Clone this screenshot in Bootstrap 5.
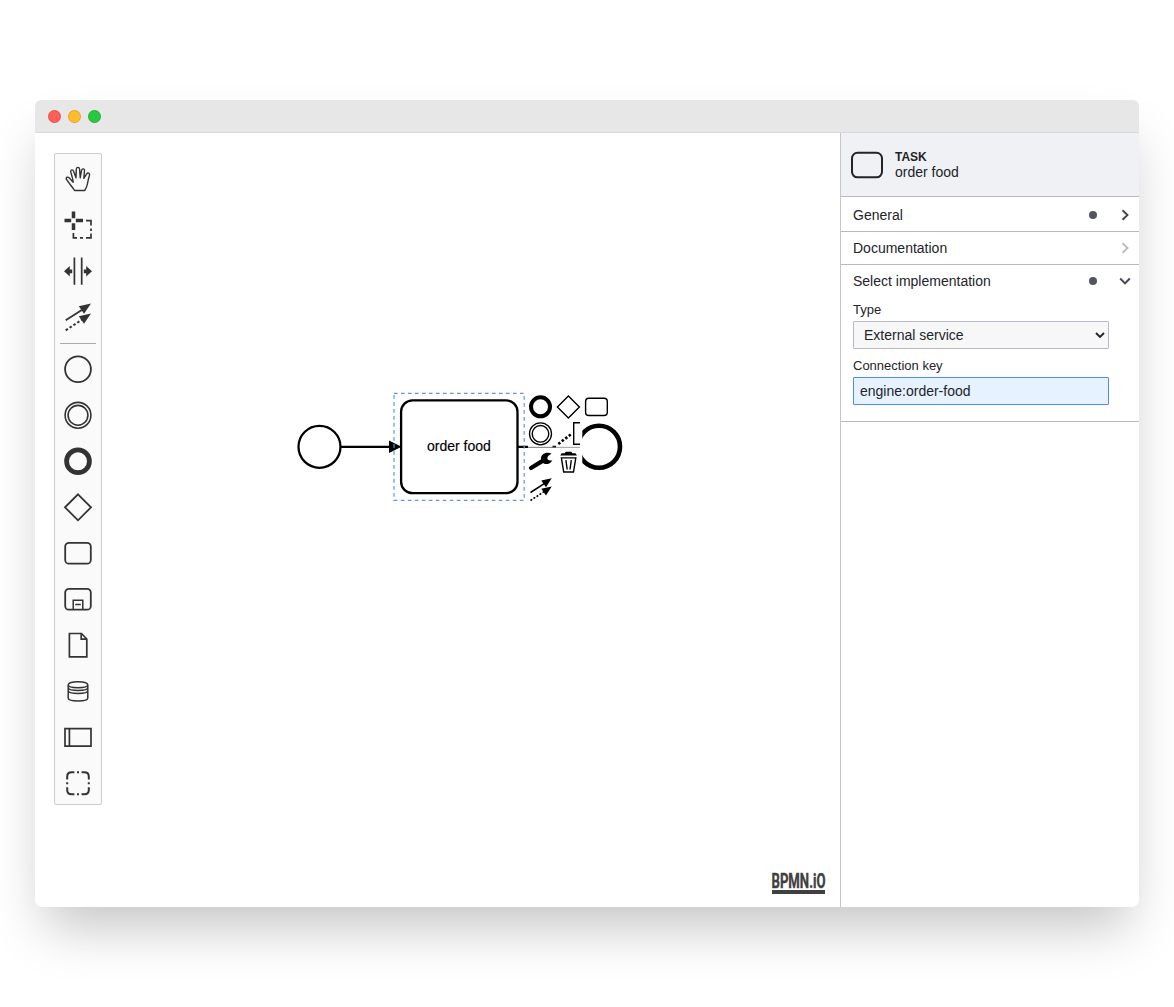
<!DOCTYPE html>
<html lang="en">
<head>
<meta charset="utf-8">
<meta name="viewport" content="width=device-width, initial-scale=1">
<title>order food</title>
<link href="https://cdn.jsdelivr.net/npm/bootstrap@5.3.0/dist/css/bootstrap.min.css" rel="stylesheet">
<script src="https://cdn.jsdelivr.net/npm/bootstrap@5.3.0/dist/js/bootstrap.bundle.min.js"></script>
<style>
body{font-family:"Liberation Sans",Arial,sans-serif;font-size:14px;line-height:16px;color:#22242a;background:#fff;padding:100px 35px;height:1007px;overflow:hidden}
.app-window{height:807px;border-radius:7px;box-shadow:0 30px 50px -10px rgba(0,0,0,.23);background:#fff}
.titlebar{height:33px;background:#e7e7e7;border-bottom:1px solid #d8d8d8;padding:1px 0 0 13px;gap:7px}
.light{width:13px;height:13px;border-radius:50%;border:1px solid rgba(0,0,0,.12)}
.light-r{background:#ff5f57}.light-y{background:#ffbd2e}.light-g{background:#28c940}
.diagram{overflow:visible}
.palette{left:19px;top:20px;width:48px;height:652px;padding-top:2px;background:#fafafa;border:1px solid #ccc;border-radius:2px}
.palette svg{width:46px;height:46px;flex:none;fill:none;stroke:#333;stroke-width:1.8}
.palette .sep{height:1px;margin:3px 5px 2px;background:#aaa;flex:none}
.palette .solid{fill:#333;stroke:none}
.props{width:299px;border-left:1px solid #c5c5cb}
.props-head{height:64px;background:#f0f1f4;border-bottom:1px solid #b9b9c8;padding:0 10px;gap:12px}
.kind{font-size:12px;line-height:15px;padding-top:1px;margin-bottom:-1px}
.grp{height:33px;border-bottom:1px solid #b9b9c8;padding:0 8px 0 12px}
.grp-first{height:35px;padding-top:1px}
.grp-open{height:32px;border-bottom:0}
.dot{width:8px;height:8px;border-radius:50%;background:#52545f}
.chev{width:12px;height:12px;margin-left:22px;fill:none;stroke:#44464f;stroke-width:1.9}
.chev-muted{stroke:#b9b9c8}
.grp-body{padding:5px 30px 16px 12px;border-bottom:1px solid #b9b9c8}
.grp-body label{font-size:13px;line-height:16px;margin-bottom:3px}
.grp-body .form-select,.grp-body .form-control{height:28px;font-size:14px;line-height:16px;border-radius:1px;color:#22242a;box-shadow:none}
.grp-body .form-select{padding:4px 20px 4px 10px;margin-bottom:9px;border-color:#b9b9c8;background:#f7f7f8 url("data:image/svg+xml,%3Csvg xmlns='http://www.w3.org/2000/svg' viewBox='0 0 10 10'%3E%3Cpath d='M1 3l4 4 4-4' fill='none' stroke='%23222' stroke-width='1.8'/%3E%3C/svg%3E") no-repeat right 3px center/10px 10px}
.grp-body .form-control{padding:4px 6px;background:#e6f2ff;border-color:#4a90ea}
</style>
</head>
<body>
<div class="app-window d-flex flex-column">
  <div class="titlebar d-flex align-items-center rounded-top flex-shrink-0">
    <span class="light light-r"></span><span class="light light-y"></span><span class="light light-g"></span>
  </div>
  <div class="d-flex flex-grow-1">
    <main class="position-relative flex-grow-1">
      <svg class="diagram d-block" width="805" height="774" viewBox="35 133 805 774" fill="none" stroke="#000">
        <!-- sequence flows -->
        <path d="M341 446.8H392M518 446.8H578" stroke-width="2.3"/>
        <path d="M389 440.6L401.5 446.8L389 453Z" fill="#000" stroke="none"/>
        <!-- events and task -->
        <circle cx="319.5" cy="446.8" r="21" stroke-width="2.3"/>
        <circle cx="599" cy="446.8" r="21" stroke-width="4.6"/>
        <rect x="401.1" y="400.3" width="116.4" height="92.9" rx="11.5" stroke-width="2.3"/>
        <text x="427" y="451.4" fill="#000" stroke="#000" stroke-width=".15" font-size="14">order food</text>
        <rect x="394" y="393.3" width="130.2" height="107" stroke="#5f93f5" stroke-width="1.2" stroke-dasharray="3.6 3.4"/>
        <!-- context pad -->
        <g fill="#fff" stroke="none" fill-opacity=".98">
          <path d="M528 395H552.5V446.9H528ZM556 395H582V446.9H556Z"/>
          <path d="M528 447.6H552.5V503H528ZM556 447.6H582V475H556Z"/>
          <path d="M580 420H582.3V475H580Z"/>
        </g>
        <path d="M528 447.3H556" stroke="#999" stroke-width=".8"/>
        <path d="M556 447.3H580" stroke="#bbb" stroke-width="1"/>
        <circle cx="540.5" cy="406.8" r="9.5" stroke-width="4"/>
        <path d="M568.4 396L579.4 407L568.4 418L557.4 407Z" stroke-width="1.4"/>
        <rect x="585.6" y="398.2" width="21.7" height="17.3" rx="3.2" stroke-width="1.4"/>
        <circle cx="540.5" cy="433.8" r="11" stroke-width="1.3"/>
        <circle cx="540.5" cy="433.8" r="8.3" stroke-width="1.4"/>
        <path d="M580 422.8H573.7V444.2H580" stroke-width="1.4"/>
        <path d="M558.3 444L572 433.5" stroke-width="2.6" stroke-dasharray="2.5 1.9"/>
        <path d="M531 468L543 460.6" stroke-width="4.2" stroke-linecap="round"/>
        <path d="M551.6 453.7C546.5 451.1 540.9 453.8 541 458.7C541.2 464.3 548.6 466.6 552.4 460.2C546.4 461.6 545.4 456 551.6 453.7Z" fill="#000" stroke="none"/>
        <path d="M560.2 455.4L561.6 453.3H564.6L565.8 451.8H571.3L572.5 453.3H575.5L577 455.4Z" fill="#000" stroke="none"/>
        <path d="M561.4 457.9H575.8L573.5 472H563.7ZM565.9 460.2L567.2 469.5M571.3 460.2L570 469.5" stroke-width="1.4"/>
        <path d="M530.5 492.5L545 483.2" stroke-width="1.5"/>
        <path d="M530.5 500.5L544 491.7" stroke-width="1.6" stroke-dasharray="2 1.6"/>
        <path d="M551.7 478.3L546 487.2L541.3 480.6ZM551.7 486.5L546 495.4L541.3 488.8Z" fill="#000" stroke="none"/>
        <!-- logo -->
        <text x="771.5" y="888" fill="#404040" stroke="#404040" stroke-width=".4" font-family="Roboto, sans-serif" font-weight="700" font-size="20.5" textLength="54" lengthAdjust="spacingAndGlyphs">BPMN.iO</text>
        <path d="M772 890H825V894H772Z" fill="#404040" stroke="none"/>
      </svg>
      <div class="palette position-absolute d-flex flex-column">
        <svg viewBox="-23 -23 46 46"><path d="M-3.4 11.5C-5.6 7.8-9.3 4.2-11.6.2C-12.4-1.8-10.2-2.6-8.7-1L-4.8 3.2C-5-.5-6.6-4.2-7.3-7.4C-7.4-9.5-5-9.7-4.4-7.8L-2-1.2L-1.7-9.8C-1.4-12.2 1.4-12.2 1.6-9.8L2.2-1.2L3.6-8.8C4.2-10.9 6.8-10.4 6.5-8.2L5.8-.6L8.7-5.2C9.8-6.8 12-5.6 11.5-3.8C10.2 0 9.9 3.6 9 6.6C8.4 8.4 7.6 9.8 6.8 11.5Z" stroke-width="1.4" stroke-linejoin="round"/></svg>
        <svg viewBox="-23 -23 46 46"><path d="M-4.5-13.5V-6.7M-4.5-1.8V5M-13.5-4.4H-6.8M-2.2-4.4H5" stroke-width="3.5"/><path d="M8-4.4H13V.5M13 3.5V6M13 8.5V12.8H8M5 12.8H2M-1 12.8H-4.6V8" stroke-width="1.7"/></svg>
        <svg viewBox="-23 -23 46 46"><path d="M-3.6-13.5V13.8M3.7-13.5V13.8" stroke-width="1.7"/><path class="solid" d="M-14 .3L-8.2-4.9V-1.6H-5.8V2.2H-8.2V5.5ZM14 .3L8.2-4.9V-1.6H5.8V2.2H8.2V5.5Z"/></svg>
        <svg viewBox="-23 -23 46 46"><path d="M-12.3 3.3L5-7.7"/><path d="M-12.3 13.3L4 2.6" stroke-width="2" stroke-dasharray="2.6 2"/><path class="solid" d="M13-13.5L6-3.2L.8-10.7ZM13-3.5L6 6.8L.8-.7Z"/></svg>
        <div class="sep"></div>
        <svg viewBox="-23 -23 46 46"><circle cy=".3" r="12.9"/></svg>
        <svg viewBox="-23 -23 46 46"><circle cy=".3" r="12.9" stroke-width="1.6"/><circle cy=".3" r="9.9" stroke-width="1.6"/></svg>
        <svg viewBox="-23 -23 46 46"><circle cy=".3" r="11.4" stroke-width="4.8"/></svg>
        <svg viewBox="-23 -23 46 46"><path d="M0-12.7L13 .3L0 13.3L-13 .3Z"/></svg>
        <svg viewBox="-23 -23 46 46"><rect x="-12.8" y="-10.2" width="25.6" height="20.9" rx="3.8"/></svg>
        <svg viewBox="-23 -23 46 46"><rect x="-12.8" y="-10.2" width="25.6" height="20.9" rx="3.8"/><path d="M-4.8 10.5V1.3H4.8V10.5M-2.8 5.5H2.8" stroke-width="1.5"/></svg>
        <svg viewBox="-23 -23 46 46"><path d="M-8.6-11.5H3.5L8.8-6V11.8H-8.6ZM3.2-11.5V-5.8H8.8" stroke-width="1.7"/></svg>
        <svg viewBox="-23 -23 46 46"><path d="M-9.8-6C-9.8-10.4 9.8-10.4 9.8-6V7C9.8 11-9.8 11-9.8 7ZM-9.8-6C-9.8-2.4 9.8-2.4 9.8-6M-9.8-3.2C-9.8.4 9.8.4 9.8-3.2M-9.8-.2C-9.8 3.4 9.8 3.4 9.8-.2" stroke-width="1.5"/></svg>
        <svg viewBox="-23 -23 46 46"><path d="M-13-8.4H13V9.1H-13ZM-8.6-8.4V9.1" stroke-width="1.7"/></svg>
        <svg viewBox="-23 -23 46 46"><path d="M-10.8-3.6V-6.4Q-10.8-10.8-6.4-10.8H-3.6M3.6-10.8H6.4Q10.8-10.8 10.8-6.4V-3.6M10.8 4.2V7Q10.8 11.3 6.4 11.3H3.6M-3.6 11.3H-6.4Q-10.8 11.3-10.8 7V4.2M-1-10.8H1M-1 11.3H1M-10.8-.7V1.3M10.8-.7V1.3" stroke-width="2"/></svg>
      </div>
    </main>
    <aside class="props flex-shrink-0">
      <div class="props-head d-flex align-items-center">
        <svg width="32" height="28" viewBox="0 0 32 28" fill="none" stroke="#22242a" stroke-width="2"><rect x="1" y="1.8" width="30" height="24.5" rx="5.5"/></svg>
        <div><div class="kind fw-bold">TASK</div><div>order food</div></div>
      </div>
      <div class="grp grp-first d-flex align-items-center"><span class="me-auto">General</span><span class="dot"></span><svg class="chev" viewBox="0 0 12 12"><path d="M3.5 1.2L8.5 6L3.5 10.8"/></svg></div>
      <div class="grp d-flex align-items-center"><span class="me-auto">Documentation</span><svg class="chev chev-muted" viewBox="0 0 12 12"><path d="M3.5 1.2L8.5 6L3.5 10.8"/></svg></div>
      <div class="grp grp-open d-flex align-items-center"><span class="me-auto">Select implementation</span><span class="dot"></span><svg class="chev" viewBox="0 0 12 12"><path d="M1.2 3.5L6 8.5L10.8 3.5"/></svg></div>
      <div class="grp-body">
        <label class="d-block" for="impl">Type</label>
        <select class="form-select" id="impl"><option>External service</option></select>
        <label class="d-block" for="key">Connection key</label>
        <input class="form-control" id="key" value="engine:order-food">
      </div>
    </aside>
  </div>
</div>
</body>
</html>
